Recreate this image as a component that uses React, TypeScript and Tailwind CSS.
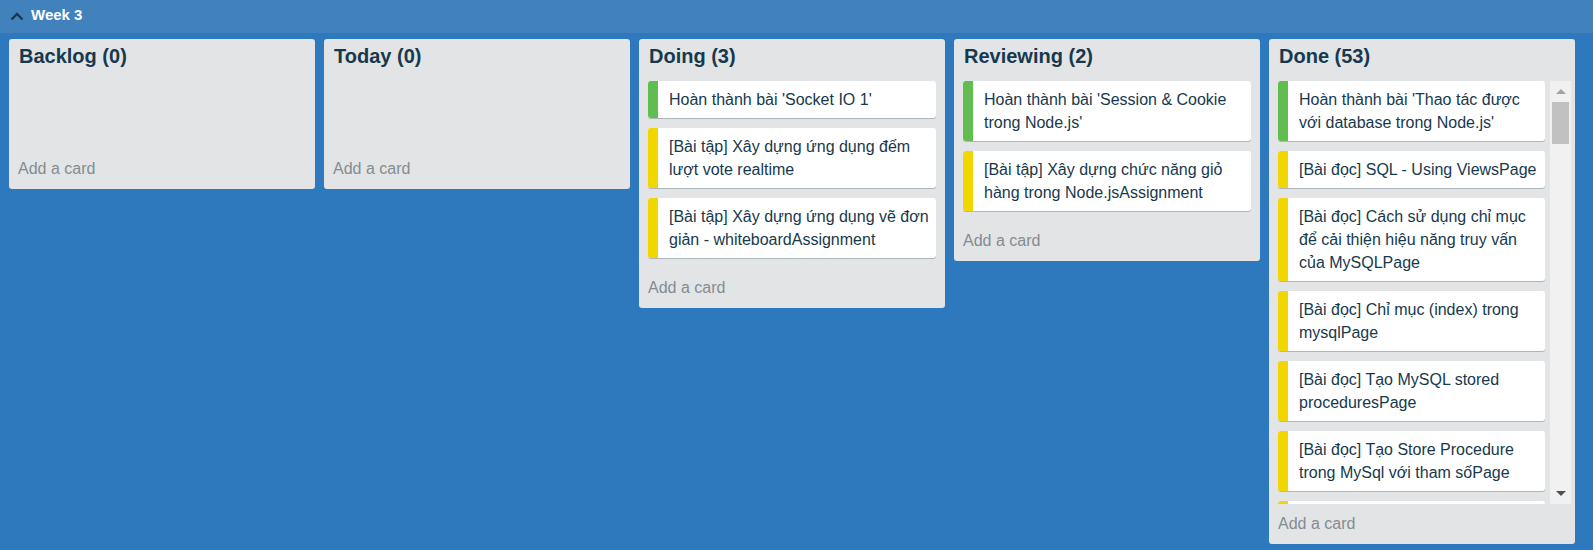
type Card = { text: string; label: 'green' | 'yellow' };
type List = { title: string; cards: Card[]; scroll?: boolean };

const lists: List[] = [
  { title: 'Backlog (0)', cards: [] },
  { title: 'Today (0)', cards: [] },
  {
    title: 'Doing (3)',
    cards: [
      { text: "Hoàn thành bài 'Socket IO 1'", label: 'green' },
      { text: '[Bài tập] Xây dựng ứng dụng đếm lượt vote realtime', label: 'yellow' },
      { text: '[Bài tập] Xây dựng ứng dụng vẽ đơn giản - whiteboardAssignment', label: 'yellow' },
    ],
  },
  {
    title: 'Reviewing (2)',
    cards: [
      { text: "Hoàn thành bài 'Session & Cookie trong Node.js'", label: 'green' },
      { text: '[Bài tập] Xây dựng chức năng giỏ hàng trong Node.jsAssignment', label: 'yellow' },
    ],
  },
  {
    title: 'Done (53)',
    scroll: true,
    cards: [
      { text: "Hoàn thành bài 'Thao tác được với database trong Node.js'", label: 'green' },
      { text: '[Bài đọc] SQL - Using ViewsPage', label: 'yellow' },
      { text: '[Bài đọc] Cách sử dụng chỉ mục để cải thiện hiệu năng truy vấn của MySQLPage', label: 'yellow' },
      { text: '[Bài đọc] Chỉ mục (index) trong mysqlPage', label: 'yellow' },
      { text: '[Bài đọc] Tạo MySQL stored proceduresPage', label: 'yellow' },
      { text: '[Bài đọc] Tạo Store Procedure trong MySql với tham sốPage', label: 'yellow' },
      { text: '', label: 'yellow' },
    ],
  },
];

function CardItem({ card }: { card: Card }) {
  return (
    <div className="flex min-h-[37px] mb-[10px] bg-white rounded-[3px] shadow-[0_1px_0_rgba(9,45,66,0.25)] overflow-hidden">
      <div className={card.label === 'green' ? 'w-[10px] shrink-0 bg-[#61bd4f]' : 'w-[10px] shrink-0 bg-[#f2d600]'} />
      <div className="py-[7px] pl-[11px] pr-[4px] text-[16px] leading-[23px] text-[#17394d]">{card.text}</div>
    </div>
  );
}

function Scrollbar() {
  return (
    <div className="w-[21px] shrink-0 ml-[5px] bg-[#f1f1f1] flex flex-col items-center">
      <div className="h-[21px] w-full flex items-center justify-center">
        <div className="w-0 h-0 border-l-[5px] border-r-[5px] border-b-[5px] border-l-transparent border-r-transparent border-b-[#a3a3a3]" />
      </div>
      <div className="w-[17px] h-[42px] bg-[#c1c1c1]" />
      <div className="flex-1" />
      <div className="h-[21px] w-full flex items-center justify-center">
        <div className="w-0 h-0 border-l-[5px] border-r-[5px] border-t-[5px] border-l-transparent border-r-transparent border-t-[#505050]" />
      </div>
    </div>
  );
}

function ListColumn({ list }: { list: List }) {
  return (
    <div className="w-[306px] shrink-0 bg-[#e2e4e6] rounded-[3px] flex flex-col">
      <div className="h-[42px] pt-[5px] pl-[10px]">
        <h2 className="text-[20px] leading-[24px] font-bold text-[#17394d]">{list.title}</h2>
      </div>
      {list.scroll ? (
        <div className="flex h-[423px] ml-[9px] mr-[4px]">
          <div className="flex-1 overflow-hidden">
            {list.cards.map((c, i) => (
              <CardItem key={i} card={c} />
            ))}
          </div>
          <Scrollbar />
        </div>
      ) : (
        <div className="px-[9px] min-h-[68px]">
          {list.cards.map((c, i) => (
            <CardItem key={i} card={c} />
          ))}
        </div>
      )}
      <div className="h-[40px] px-[9px] flex items-center text-[16px] text-[#838c91]">Add a card</div>
    </div>
  );
}

export default function App() {
  return (
    <div className="h-screen bg-[#2e79bd] font-['Liberation_Sans',Arial,sans-serif] overflow-hidden">
      <div className="h-[33px] bg-[#4182bd] flex items-center pl-[10px] gap-[7px]">
        <svg width="14" height="9" viewBox="0 0 14 9" className="mt-[-1px]">
          <polyline points="1.5,7.5 7,2 12.5,7.5" fill="none" stroke="#17394d" strokeWidth="2.4" />
        </svg>
        <span className="text-white font-bold text-[15px] leading-[20px] mt-[-3px]">Week 3</span>
      </div>
      <div className="flex items-start gap-[9px] px-[9px] pt-[6px]">
        {lists.map((l) => (
          <ListColumn key={l.title} list={l} />
        ))}
      </div>
    </div>
  );
}
